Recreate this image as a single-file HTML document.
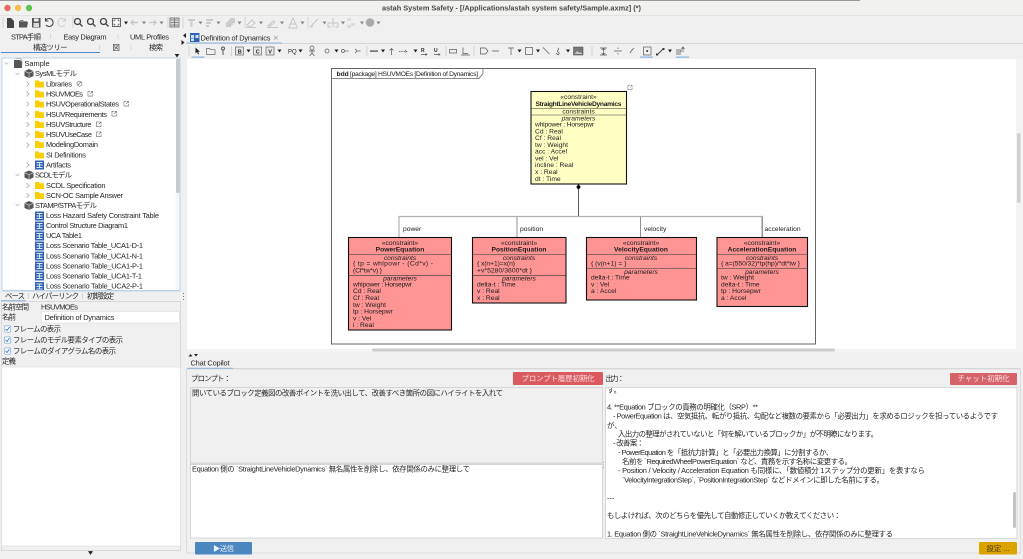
<!DOCTYPE html>
<html lang="ja"><head><meta charset="utf-8"><title>astah System Safety</title>
<style>
html,body{margin:0;padding:0;background:#f0f0f0;width:1023px;height:559px;overflow:hidden}
svg{display:block;filter:blur(.3px)}
svg svg,symbol{filter:none}
text{font-family:"Liberation Sans","Noto Sans CJK JP",sans-serif;font-size:7.400px;fill:#262626;white-space:pre}
.d text{font-size:6.700px;fill:#1c1c1c}
.c{text-anchor:middle}
.b{font-weight:bold}
.i{font-style:italic}
</style></head><body>
<svg width="1023" height="559" viewBox="0 0 1023 559" xmlns="http://www.w3.org/2000/svg">
<defs>
<symbol id="folder" viewBox="0 0 10 9" overflow="visible"><path d="M0 1h4l1 1.500h5V9H0z" fill="#fcd000"/></symbol>
<symbol id="cube" viewBox="0 0 10 9" overflow="visible"><path d="M5 0l4.500 2v5L5 9 .5 7V2z" fill="#555"/><path d="M.8 2.300L5 4.200l4.200-1.900M5 4.200V9" stroke="#ddd" stroke-width=".6" fill="none"/></symbol>
<symbol id="tb" viewBox="0 0 9 9" overflow="visible"><rect width="9" height="9" fill="#2f63b0"/><path d="M1.500 2h6M1.500 4.500h6M1.500 7h6M4.500 1.500v6" stroke="#dce8f8" stroke-width=".9"/></symbol>
<symbol id="link" viewBox="0 0 6 6" overflow="visible"><path d="M3 .5H.5v5h5V3M3 3L5.500.5M3.800.5h1.700v1.700" fill="none" stroke="#666" stroke-width=".6"/></symbol>
<symbol id="chev" viewBox="0 0 4 6" overflow="visible"><path d="M.5.5L3 3 .5 5.500" fill="none" stroke="#aaa" stroke-width=".8"/></symbol>
<symbol id="down" viewBox="0 0 6 4" overflow="visible"><path d="M.5.5L3 3 5.500.5" fill="none" stroke="#aaa" stroke-width=".8"/></symbol>
<symbol id="tri" viewBox="0 0 4 3" overflow="visible"><path d="M0 0h4L2 3z" fill="#222"/></symbol>
<symbol id="trig" viewBox="0 0 4 3" overflow="visible"><path d="M0 0h4L2 3z" fill="#888"/></symbol>
<symbol id="cb" viewBox="0 0 7 7" overflow="visible"><rect x=".3" y=".3" width="6.400" height="6.400" rx="1" fill="#fff" stroke="#7fa9dc" stroke-width=".7"/><path d="M1.500 3.500L3 5l2.500-3.500" fill="none" stroke="#3b7fd0" stroke-width=".9"/></symbol>
</defs>

<!-- window chrome -->
<rect width="1023" height="559" fill="#f0f0f0"/>
<rect width="1023" height="15" fill="#f1f1ef"/>
<rect width="860" height="1" fill="#999"/>
<rect y="15" width="1023" height="1" fill="#e2e2e2"/>
<rect x="186" y="43" width="837" height="1" fill="#d6d6d6"/>
<circle cx="7.500" cy="8" r="3.200" fill="#ec6a5e"/><circle cx="18" cy="8" r="3.200" fill="#f4bf4f"/><circle cx="29" cy="8" r="3.200" fill="#61c554"/>
<text x="382" y="10.500" class="b" textLength="259" style="fill:#4a4a4a">astah System Safety - [/Applications/astah system safety/Sample.axmz] (*)</text>

<!-- toolbar 1 -->
<g stroke="#cfcfcf" stroke-width=".8"><path d="M3 17v11M73 17v11M168 17v11M183 17v11M245 17v11M308 17v11"/></g>
<path d="M7 18h4l3 3v7H7z" fill="#444"/>
<path d="M19 21h4l1 1h4l-1 5.500H19z" fill="#555"/><path d="M20 20h3l1 1h3v1h-7z" fill="#888"/>
<rect x="32" y="18" width="8.500" height="9.500" fill="#555"/><rect x="34" y="18.500" width="4.500" height="3" fill="#eee"/><rect x="33.500" y="23" width="5.500" height="4" fill="#ddd"/>
<path d="M46 20a4 4 0 1 1 0 5M45.500 18v3h3" fill="none" stroke="#444" stroke-width="1.100"/>
<path d="M65 20a4 4 0 1 0 0 5M65.500 18v3h-3" fill="none" stroke="#ccc" stroke-width="1"/>
<g fill="none" stroke="#444" stroke-width="1.300"><circle cx="77.500" cy="21.500" r="3"/><path d="M80 24l2.500 2.500"/><circle cx="90.500" cy="21.500" r="3"/><path d="M93 24l2.500 2.500"/><circle cx="103.500" cy="21.500" r="3"/><path d="M106 24l2.500 2.500"/></g>
<rect x="112.500" y="18.500" width="8" height="8" fill="#fff" stroke="#555" stroke-width=".9"/><path d="M114 20h1.500M114 20v1.500M119 25h-1.500M119 25v-1.500M119 20h-1.500M119 20v1.500M114 25h1.500M114 25v-1.500" stroke="#333" stroke-width=".7"/>
<use href="#tri" x="124" y="21.500" width="4" height="3"/>
<path d="M131 22.500h7M133.500 20l-2.500 2.500 2.500 2.500M149 22.500h7M153.500 20l2.500 2.500-2.500 2.500" stroke="#c4c4c4" stroke-width="1.200" fill="none"/>
<use href="#trig" x="142" y="21.500" width="4" height="3"/><use href="#trig" x="159.500" y="21.500" width="4" height="3"/>
<rect x="170" y="18" width="9" height="9" fill="#ddd" stroke="#666" stroke-width=".8"/><path d="M171 20h7M171 22.500h7M171 25h7M174.500 18.500v8" stroke="#666" stroke-width=".7"/>
<g fill="#ccc"><rect x="188" y="19" width="7" height="2"/><rect x="190.500" y="21" width="2" height="6"/><rect x="206" y="19" width="7" height="2"/><rect x="206" y="22" width="5" height="2"/><rect x="206" y="25" width="3" height="2"/><rect x="226" y="22" width="5" height="5"/><rect x="228" y="20" width="5" height="5"/><rect x="230" y="18" width="5" height="5"/></g>
<g fill="none" stroke="#c6c6c6"><path d="M247 25l5-5 3 3-5 4zM246 27.500h10"/><path d="M268 26l5-5 2 1-5 4zM267 27.500h11"/><path d="M289 27l4-9 4 9M290.500 24h5M288 28h10"/><path d="M311 26l7-7M312 25l-1 2 2-1"/><path d="M333 18v5M328 23h10v4h-3M328 23v4h3M333 23v4"/></g>
<use href="#trig" x="198.500" y="21.500" width="4" height="3"/><use href="#trig" x="216.500" y="21.500" width="4" height="3"/><use href="#trig" x="237.500" y="21.500" width="4" height="3"/><use href="#trig" x="259" y="21.500" width="4" height="3"/><use href="#trig" x="280" y="21.500" width="4" height="3"/><use href="#trig" x="300.500" y="21.500" width="4" height="3"/><use href="#trig" x="322.500" y="21.500" width="4" height="3"/><use href="#trig" x="341" y="21.500" width="4" height="3"/><use href="#trig" x="360" y="21.500" width="4" height="3"/><use href="#trig" x="376.500" y="21.500" width="4" height="3"/>
<g fill="#ddd"><rect x="347" y="18" width="4" height="3"/><rect x="351" y="23" width="4" height="3"/><rect x="347" y="25" width="4" height="3"/></g>
<circle cx="370" cy="22.500" r="4.300" fill="#aaa"/>

<!-- left tabs -->
<text x="11" y="39.500" textLength="30">STPA手順</text>
<text x="63.500" y="39.500" textLength="43">Easy Diagram</text>
<text x="130" y="39.500" textLength="39">UML Profiles</text>
<path d="M50.500 34v5M118 34v5" stroke="#ccc" stroke-width=".7"/>
<path d="M186 33l-3 2.500 3 2.500zM181.500 40l3 2.500-3 2.500z" fill="#222"/>
<text x="33" y="50" textLength="34.500">構造ツリー</text>
<text x="112.500" y="50" textLength="7">図</text>
<text x="149" y="50" textLength="14">検索</text>
<path d="M99.500 45v5M131 45v5" stroke="#ccc" stroke-width=".7"/>
<rect x="1" y="52" width="99" height="1" fill="#4a8ad4"/>
<use href="#tri" x="174" y="54" width="6" height="3.500"/>

<!-- tree -->
<rect x="2" y="58" width="178" height="233" fill="#fff" stroke="#bcd3ea" stroke-width="1"/>
<rect x="176" y="59" width="3.500" height="134" fill="#c9c9c9" rx="1.500"/>
<rect x="175.500" y="193" width="4" height="97" fill="#f7f7f7"/>
<use href="#down" x="4" y="62" width="5" height="3"/>
<path d="M14 60h6l2 2v6h-8z" fill="#555"/><path d="M16 58.500h4l2 2v5h-1" fill="none" stroke="#888" stroke-width=".6"/>
<text x="24.500" y="66">Sample</text>
<use href="#down" x="15" y="72.500" width="5" height="3"/><use href="#cube" x="24" y="69" width="10" height="9"/>
<text x="35" y="76" textLength="42">SysMLモデル</text>
<g><use href="#chev" x="26" y="81" width="4" height="6"/><use href="#folder" x="35" y="79.500" width="9" height="8"/><text x="46" y="86.300" textLength="26">Libraries</text>
<circle cx="79.500" cy="83.700" r="2.500" fill="none" stroke="#666" stroke-width=".6"/><path d="M78 85l3-3" stroke="#666" stroke-width=".6"/></g>
<use href="#chev" x="26" y="91" width="4" height="6"/><use href="#folder" x="35" y="89.500" width="9" height="8"/><text x="46" y="96.500" textLength="37">HSUVMOEs</text><use href="#link" x="87.500" y="91" width="5.500" height="5.500"/>
<use href="#chev" x="26" y="101" width="4" height="6"/><use href="#folder" x="35" y="99.500" width="9" height="8"/><text x="46" y="106.600" textLength="73">HSUVOperationalStates</text><use href="#link" x="123.500" y="101" width="5.500" height="5.500"/>
<use href="#chev" x="26" y="111" width="4" height="6"/><use href="#folder" x="35" y="110" width="9" height="8"/><text x="46" y="116.800" textLength="61">HSUVRequirements</text><use href="#link" x="111.500" y="111" width="5.500" height="5.500"/>
<use href="#chev" x="26" y="121.500" width="4" height="6"/><use href="#folder" x="35" y="120" width="9" height="8"/><text x="46" y="127" textLength="45.500">HSUVStructure</text><use href="#link" x="96" y="121.500" width="5.500" height="5.500"/>
<use href="#chev" x="26" y="131.500" width="4" height="6"/><use href="#folder" x="35" y="130" width="9" height="8"/><text x="46" y="137" textLength="46">HSUVUseCase</text><use href="#link" x="96" y="131.500" width="5.500" height="5.500"/>
<use href="#chev" x="26" y="142" width="4" height="6"/><use href="#folder" x="35" y="140" width="9" height="8"/><text x="46" y="147.200" textLength="52">ModelingDomain</text>
<use href="#folder" x="35" y="150.500" width="9" height="8"/><text x="46" y="157.300" textLength="40">SI Definitions</text>
<use href="#chev" x="26" y="162" width="4" height="6"/><use href="#tb" x="35" y="160.500" width="9" height="9"/><text x="46" y="167.500" textLength="25">Artifacts</text>
<use href="#down" x="15" y="173.500" width="5" height="3"/><use href="#cube" x="24" y="170.500" width="10" height="9"/><text x="35" y="177.500" textLength="37">SCDLモデル</text>
<use href="#chev" x="26" y="182.500" width="4" height="6"/><use href="#folder" x="35" y="181" width="9" height="8"/><text x="46" y="187.800" textLength="59.500">SCDL Specification</text>
<use href="#chev" x="26" y="192.500" width="4" height="6"/><use href="#folder" x="35" y="191" width="9" height="8"/><text x="46" y="197.800" textLength="77">SCN-OC Sample Answer</text>
<use href="#down" x="15" y="203.500" width="5" height="3"/><use href="#cube" x="24" y="201" width="10" height="9"/><text x="35" y="207.800" textLength="62">STAMP/STPAモデル</text>
<use href="#tb" x="35" y="211.500" width="9" height="9"/><text x="46" y="218" textLength="113">Loss Hazard Safety Constraint Table</text>
<use href="#tb" x="35" y="221.500" width="9" height="9"/><text x="46" y="228" textLength="82">Control Structure Diagram1</text>
<use href="#tb" x="35" y="231.500" width="9" height="9"/><text x="46" y="238" textLength="36">UCA Table1</text>
<use href="#tb" x="35" y="241.500" width="9" height="9"/><text x="46" y="248.200" textLength="97">Loss Scenario Table_UCA1-D-1</text>
<use href="#tb" x="35" y="251.500" width="9" height="9"/><text x="46" y="258.300" textLength="97">Loss Scenario Table_UCA1-N-1</text>
<use href="#tb" x="35" y="261.500" width="9" height="9"/><text x="46" y="268.400" textLength="97">Loss Scenario Table_UCA1-P-1</text>
<use href="#tb" x="35" y="271.500" width="9" height="9"/><text x="46" y="278.500" textLength="96">Loss Scenario Table_UCA1-T-1</text>
<svg x="3" y="281" width="172" height="9.500"><use href="#tb" x="32" y="1" width="9" height="9"/><text x="43" y="7.600" textLength="97">Loss Scenario Table_UCA2-P-1</text></svg>
<rect x="3" y="290" width="176" height="1" fill="#bcd3ea"/>

<!-- properties -->
<path d="M87 293h8" stroke="#ccc" stroke-dasharray="1 1"/>
<text x="5" y="298.500" textLength="20">ベース</text>
<text x="32" y="298.500" textLength="47">ハイパーリンク</text>
<text x="87" y="298.500" textLength="27">初期設定</text>
<path d="M28.500 293v6M82.500 293v6" stroke="#ccc" stroke-width=".7"/>
<rect x="1" y="300.500" width="25" height="1" fill="#4a8ad4"/>
<rect x="1.500" y="301.500" width="179" height="249" fill="#f0f0f0" stroke="#d4d4d4" stroke-width=".8"/>
<path d="M183.500 293v1M183.500 296v1M183.500 299v1" stroke="#777" stroke-width="1"/>
<text x="2" y="309.500" textLength="27">名前空間</text><text x="41" y="309.500" textLength="37">HSUVMOEs</text>
<text x="2" y="319.500" textLength="14">名前</text>
<rect x="41.500" y="311.500" width="138" height="11.500" fill="#fff" stroke="#e0e0e0" stroke-width=".7"/>
<text x="44.500" y="320" textLength="70">Definition of Dynamics</text>
<use href="#cb" x="4" y="325.500" width="7" height="7"/><text x="13" y="331.500" textLength="48">フレームの表示</text>
<use href="#cb" x="4" y="336.500" width="7" height="7"/><text x="13" y="342.500" textLength="110">フレームのモデル要素タイプの表示</text>
<use href="#cb" x="4" y="347.500" width="7" height="7"/><text x="13" y="353.500" textLength="103">フレームのダイアグラム名の表示</text>
<text x="2" y="363.500" textLength="14">定義</text>
<rect x="1.500" y="367" width="179" height="179" fill="#fff" stroke="#ddd" stroke-width=".7"/>
<use href="#tri" x="88" y="551" width="5" height="4"/>

<!-- diagram tab -->
<rect x="190" y="33" width="9.500" height="9" fill="#2f63b0"/><path d="M191 35h3v3h-3zM195.500 35h3v3h-3zM191 38.500h3v2.500h-3z" fill="#cfe0f6"/>
<text x="200.500" y="40.500" textLength="70">Definition of Dynamics</text>
<path d="M274 36l3.500 3.500M277.500 36L274 39.500" stroke="#999" stroke-width=".7"/>
<rect x="187" y="42.500" width="95" height="1" fill="#8cb4e0"/>

<!-- toolbar 2 -->
<g stroke="#ccc" stroke-width=".8"><path d="M189 46v10M231.500 46v10M367 46v10M446 46v10M474 46v10M592 46v10"/></g>
<path d="M195.500 47.500v6l1.500-1.500 1 2.500 1-.5-1-2.200h2z" fill="#222"/><rect x="191.500" y="56.500" width="13" height="1.300" fill="#8db7e4"/>
<path d="M206.500 48.500h3l1 1.200h4.500V54.500h-8.500z" fill="none" stroke="#666" stroke-width=".7"/>
<circle cx="223" cy="48.500" r="1.500" fill="none" stroke="#555"/><path d="M223 50v5" stroke="#555"/>
<g fill="#e8e8e8" stroke="#666" stroke-width=".7"><rect x="235.500" y="47" width="8" height="8"/><rect x="253.500" y="47" width="8" height="8"/><rect x="266" y="47" width="8" height="8"/></g>
<text x="237.700" y="53.300" style="font-size:5.500px" class="b">B</text><text x="255.700" y="53.300" style="font-size:5.500px" class="b">C</text><text x="268.200" y="53.300" style="font-size:5.500px" class="b">V</text>
<use href="#tri" x="246.500" y="49.500" width="4" height="3"/><use href="#tri" x="277.500" y="49.500" width="4" height="3"/><use href="#tri" x="298.500" y="49.500" width="4" height="3"/><use href="#tri" x="334.500" y="49.500" width="4" height="3"/><use href="#tri" x="381" y="49.500" width="4" height="3"/><use href="#tri" x="413.500" y="49.500" width="4" height="3"/><use href="#tri" x="517.500" y="49.500" width="4" height="3"/><use href="#tri" x="536" y="49.500" width="4" height="3"/><use href="#tri" x="566" y="49.500" width="4" height="3"/><use href="#tri" x="668" y="49.500" width="4" height="3"/>
<text x="288" y="53.500" style="font-size:6px">PQ</text>
<g fill="none" stroke="#555" stroke-width=".7">
<circle cx="312" cy="48" r="2"/><path d="M312 50v3M309 51h6M312 53l-2.500 3M312 53l2.500 3"/>
<circle cx="327" cy="51" r="2"/>
<circle cx="343" cy="51" r="1.500"/><path d="M345 51h3.500"/><path d="M355 49a2.500 2.500 0 0 1 1.500 2 2.500 2.500 0 0 1-1.500 2M356.500 51h4"/>
<path d="M391.500 55v-6M389.500 50.500l2-2 2 2"/><path d="M399 51.500h8M405 50l2 1.500-2 1.500" stroke-dasharray="1.500 .7"/>
<path d="M421 54.500h6M425.500 53.500l1.500 1-1.500 1M434 54.500h6M438.500 53.500l1.500 1-1.500 1"/>
<rect x="449.500" y="49.500" width="7" height="3.500"/><path d="M463 47.500v6h5M461 55h9"/>
<path d="M480.500 48h5l2.500 3-2.500 3h-5zM492 51h7" />
<path d="M508 48h6M511 48v7"/><rect x="525.500" y="47.500" width="7" height="7"/><path d="M543 47.500l6.500 6.500M558 48c2 1-2 3 0 4s1 2 0 3M556 53l2 2"/>
<path d="M600 48h7M603.500 48.500v6M600 55h7M601.500 50l2-1.500 2 1.500M601.500 53l2 1.500 2-1.500"/>
<path d="M614 51h8M618 47.500v1.500M618 53v1.500"/>
<path d="M630 53l2-3 2-2"/>
<rect x="643.500" y="47" width="7.500" height="8"/>
</g>
<text x="421" y="52" style="font-size:5px" class="b">R</text><text x="434" y="52" style="font-size:5px" class="b">U</text>
<rect x="370" y="50.500" width="8" height="1.200" fill="#444"/>
<rect x="573.500" y="47" width="9.500" height="8" fill="#777" stroke="#444" stroke-width=".5"/><path d="M574.500 54l3-3 2 2 1-1 2 2" fill="#ccc"/>
<circle cx="647.200" cy="51" r="1" fill="#333"/><rect x="640" y="56.500" width="13" height="1.300" fill="#8db7e4"/>
<path d="M657 55l6-6" stroke="#444"/><rect x="656" y="53.500" width="2" height="2" fill="#333"/><rect x="662.500" y="48" width="2" height="2" fill="#333"/>
<path d="M676 50h5v2h-5M676 54h5M683 47v5M681.500 49l1.500-2 1.500 2" fill="none" stroke="#555" stroke-width=".7"/><rect x="676" y="56.500" width="13" height="1.300" fill="#8db7e4"/>

<!-- canvas -->
<rect x="187" y="59" width="829" height="290" fill="#fff"/>
<rect x="1016" y="59" width="7" height="290" fill="#f4f4f4"/>
<rect x="1017" y="133" width="3.500" height="70" rx="1.500" fill="#cfcfcf"/>
<rect x="187" y="349" width="836" height="3" fill="#f4f4f4"/>
<rect x="372" y="348.500" width="463" height="3" rx="1.500" fill="#cbcbcb"/>
<path d="M600 355h8" stroke="#aaa" stroke-width="1" stroke-dasharray="1 1"/>

<g class="d">
<rect x="331.500" y="68.500" width="484" height="275.500" fill="#fff" stroke="#666" stroke-width="1"/>
<path d="M331.500 78.500H479l4-5v-5" fill="none" stroke="#666" stroke-width=".8"/>
<text x="336.500" y="76" class="b">bdd</text><text x="350" y="76" textLength="128">[package] HSUVMOEs [Definition of Dynamics]</text>
<use href="#link" x="627.500" y="85" width="5" height="5"/>

<!-- connectors -->
<path d="M578.500 190v27" stroke="#555" stroke-width="1"/>
<path d="M578.500 184l2.200 3-2.200 3-2.200-3z" fill="#000"/>
<path d="M399 237v-20.500h363.500V237" fill="none" stroke="#b0b0b0" stroke-width="1.200"/>
<path d="M517 217v20M640.500 217v20M762 217v20" stroke="#777" stroke-width=".8"/>
<text x="403" y="231">power</text><text x="520" y="231">position</text><text x="644" y="231">velocity</text><text x="764.500" y="231">acceleration</text>

<!-- yellow -->
<rect x="531" y="91.500" width="95.500" height="92.500" fill="#ffffc4" stroke="#111" stroke-width="1.100"/>
<path d="M531 108.500h95.500M531 115h95.500" stroke="#333" stroke-width=".6"/>
<text x="578.500" y="99" class="c">«constraint»</text>
<text x="578.500" y="106" class="c b" textLength="86">StraightLineVehicleDynamics</text>
<text x="578.500" y="113.500" class="c">constraints</text>
<text x="578.500" y="120.500" class="c i">parameters</text>
<text x="535" y="126.500" textLength="59">whlpower : Horsepwr</text>
<text x="535" y="133.300">Cd : Real</text><text x="535" y="140">Cf : Real</text><text x="535" y="146.800">tw : Weight</text><text x="535" y="153.500">acc : Accel</text><text x="535" y="160.300">vel : Vel</text><text x="535" y="167.200">incline : Real</text><text x="535" y="174">x : Real</text><text x="535" y="180.800">dt : Time</text>

<!-- power -->
<rect x="348.500" y="237.500" width="103" height="92.500" fill="#ff9494" stroke="#111" stroke-width="1.100"/>
<path d="M348.500 254.500h103M348.500 275.300h103" stroke="#333" stroke-width=".6"/>
<text x="400" y="245" class="c">«constraint»</text><text x="400" y="251.500" class="c b">PowerEquation</text>
<text x="400" y="260" class="c i">constraints</text>
<text x="353" y="265.500" textLength="80">{ tp = whlpowr - (Cd*v) -</text><text x="353" y="272.300" textLength="29">(Cf*tw*v) }</text>
<text x="400" y="280.500" class="c i">parameters</text>
<text x="353" y="286.500" textLength="59">whlpower : Horsepwr</text><text x="353" y="293">Cd : Real</text><text x="353" y="300">Cf : Real</text><text x="353" y="306.800">tw : Weight</text><text x="353" y="313.500">tp : Horsepwr</text><text x="353" y="320.300">v : Vel</text><text x="353" y="327">i : Real</text>

<!-- position -->
<rect x="472.500" y="237.500" width="93.500" height="65.500" fill="#ff9494" stroke="#111" stroke-width="1.100"/>
<path d="M472.500 254.500h93.500M472.500 275.300h93.500" stroke="#333" stroke-width=".6"/>
<text x="519" y="245" class="c">«constraint»</text><text x="519" y="251.500" class="c b">PositionEquation</text>
<text x="519" y="260" class="c i">constraints</text>
<text x="477" y="265.500" textLength="38">{ x(n+1)=x(n)</text><text x="477" y="272.300" textLength="55">+v*5280/3600*dt }</text>
<text x="519" y="280.500" class="c i">parameters</text>
<text x="477" y="286.500">delta-t : Time</text><text x="477" y="293">v : Real</text><text x="477" y="300">x : Real</text>

<!-- velocity -->
<rect x="586.500" y="237.500" width="110" height="62.500" fill="#ff9494" stroke="#111" stroke-width="1.100"/>
<path d="M586.500 254.500h110M586.500 268.500h110" stroke="#333" stroke-width=".6"/>
<text x="641" y="245" class="c">«constraint»</text><text x="641" y="251.500" class="c b">VelocityEquation</text>
<text x="641" y="260" class="c i">constraints</text>
<text x="591" y="265.500">{ (v(n+1) = }</text>
<text x="641" y="274" class="c i">parameters</text>
<text x="591" y="279.500">delta-t : Time</text><text x="591" y="286.500">v : Vel</text><text x="591" y="293">a : Accel</text>

<!-- acceleration -->
<rect x="717" y="237.500" width="90.500" height="69" fill="#ff9494" stroke="#111" stroke-width="1.100"/>
<path d="M717 254.500h90.500M717 268.500h90.500" stroke="#333" stroke-width=".6"/>
<text x="762" y="245" class="c">«constraint»</text><text x="762" y="251.500" class="c b">AccelerationEquation</text>
<text x="762" y="260" class="c i">constraints</text>
<text x="721" y="265.500" textLength="79">{ a=(550/32)*tp(hp)/*dt*tw }</text>
<text x="762" y="274" class="c i">parameters</text>
<text x="721" y="279.500">tw : Weight</text><text x="721" y="286.500">delta-t : Time</text><text x="721" y="293">tp : Horsepwr</text><text x="721" y="300">a : Accel</text>
</g>

<!-- chat panel -->
<rect x="187" y="352" width="836" height="207" fill="#f0f0f0"/>
<path d="M188.500 356.500l2-2.500 2 2.500zM194 354h4l-2 2.500z" fill="#222"/>
<text x="190.500" y="365.500" textLength="39">Chat Copilot</text>
<rect x="187" y="368.200" width="833" height=".8" fill="#d0d0d0"/>
<rect x="187" y="367.800" width="46" height="1.200" fill="#7fabd8"/>
<rect x="186.500" y="369" width="834" height="184" fill="none" stroke="#d4d4d4" stroke-width=".7"/>
<text x="191" y="381" textLength="40">プロンプト：</text>
<rect x="513" y="372" width="90" height="13" rx="1" fill="#d95a5f"/>
<text x="558" y="381" class="c" style="fill:#fbe4e4" textLength="73">プロンプト履歴初期化</text>
<rect x="190.500" y="387.500" width="412" height="75.500" fill="#f0f0f0" stroke="#cfcfcf" stroke-width=".8"/>
<text x="192" y="395.500" textLength="311">開いているブロック定義図の改善ポイントを洗い出して、改善すべき箇所の図にハイライトを入れて</text>
<rect x="190.500" y="463" width="412" height="1.500" fill="#d9d9d9"/>
<rect x="190.500" y="464.500" width="412" height="73.500" fill="#fff" stroke="#cfcfcf" stroke-width=".8"/>
<text x="192" y="471.500" textLength="278">Equation 側の `StraightLineVehicleDynamics` 無名属性を削除し、依存関係のみに整理して</text>
<rect x="195" y="542" width="57" height="12.500" rx="1" fill="#4a86bf"/>
<text x="223.500" y="551" class="c" style="fill:#e6f0fa" textLength="21">▶送信</text>

<text x="605.500" y="381" textLength="19">出力：</text>
<rect x="950" y="373" width="67" height="12" rx="1" fill="#d6626a"/>
<text x="983.500" y="381" class="c" style="fill:#fbe4e4" textLength="52">チャット初期化</text>
<rect x="605.500" y="387.500" width="411.500" height="151" fill="#fff" stroke="#d0d0d0" stroke-width=".8"/>
<svg x="606" y="388" width="410" height="150">
<g transform="translate(-606,-388)">
<text x="607" y="392.500">す。</text>
<text x="607" y="409.500" textLength="151">4. **Equation ブロックの責務の明確化（SRP）**</text>
<text x="613" y="418.500" textLength="385">- PowerEquation は、空気抵抗、転がり抵抗、勾配など複数の要素から「必要出力」を求めるロジックを担っているようです</text>
<text x="607" y="428">が、</text>
<text x="618" y="436.500" textLength="260">入出力の整理がされていないと「何を解いているブロックか」が不明瞭になります。</text>
<text x="613" y="445.500" textLength="31">- 改善案：</text>
<text x="618" y="455" textLength="215">- PowerEquation を「抵抗力計算」と「必要出力換算」に分割するか、</text>
<text x="622" y="464" textLength="230">名前を `RequiredWheelPowerEquation` など、責務を示す名称に変更する。</text>
<text x="618" y="473" textLength="307">- Position / Velocity / Acceleration Equation も同様に、「数値積分 1ステップ分の更新」を表すなら</text>
<text x="622" y="482.500" textLength="262">`VelocityIntegrationStep`, `PositionIntegrationStep` などドメインに即した名前にする。</text>
<text x="607" y="500.500">---</text>
<text x="607" y="518" textLength="234">もしよければ、次のどちらを優先して自動修正していくか教えてください：</text>
<text x="607" y="536.500" textLength="286">1. Equation 側の `StraightLineVehicleDynamics` 無名属性を削除し、依存関係のみに整理する</text>
</g></svg>
<rect x="1013" y="492" width="3" height="36" rx="1.500" fill="#c4c4c4"/>
<path d="M603.500 462v1M603.500 464.500v1M603.500 467v1" stroke="#aaa"/>
<rect x="979" y="542" width="38" height="12.500" rx="1" fill="#dca300"/>
<text x="998" y="551" class="c" style="fill:#4a3a00" textLength="23">設定 ...</text>
</svg>
</body></html>
